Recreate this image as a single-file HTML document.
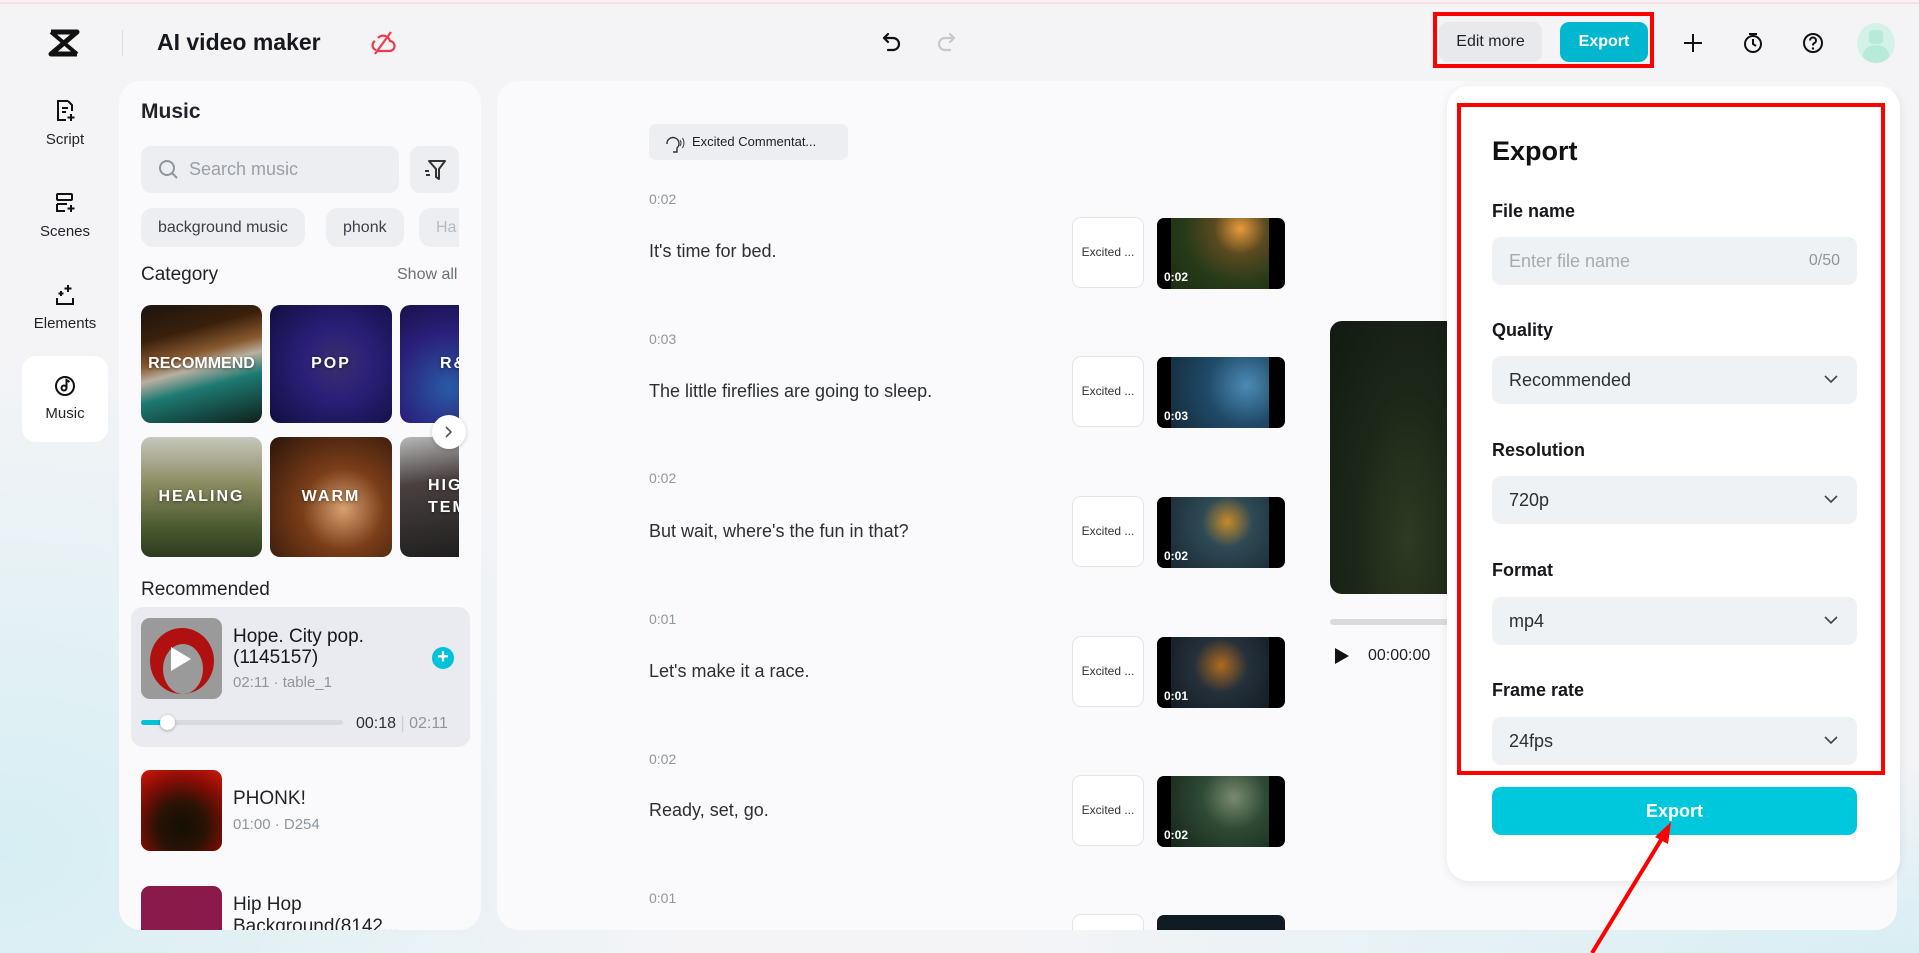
<!DOCTYPE html>
<html><head><meta charset="utf-8"><style>
*{box-sizing:border-box;margin:0;padding:0}
body{width:1919px;height:953px;overflow:hidden;font-family:"Liberation Sans",sans-serif;color:#1f2329;position:relative;
background:radial-gradient(ellipse 700px 500px at 0px 850px,#d6eef3 0%,rgba(214,238,243,0) 100%),radial-gradient(ellipse 900px 200px at 1900px 953px,#d8eef3 0%,rgba(216,238,243,0) 100%),#f4f4f7;}
.abs{position:absolute}
.topline{left:0;top:2px;width:1919px;height:2px;background:#f9dde3}
.nav{left:22px;width:86px;text-align:center;font-size:15px;color:#1f2329}
.nav svg{display:block;margin:0 auto 8px}
.panel{background:#fafafc;border-radius:22px}
.chip{background:#eceef2;border-radius:12px;height:39px;line-height:39px;font-size:16px;color:#3a3f47;padding:0 17px;position:absolute;top:207px}
.tile{position:absolute;border-radius:10px;overflow:hidden;color:#fff;font-weight:bold;font-size:16px;letter-spacing:2px;display:flex;align-items:center;justify-content:center;text-shadow:0 1px 3px rgba(0,0,0,.5)}
.tm{font-size:14px;color:#9096a0;position:absolute;left:649px}
.sent{font-size:18px;color:#2b2f36;position:absolute;left:649px}
.exc{position:absolute;left:1072px;width:72px;height:71px;border:1px solid #e3e5e8;border-radius:9px;background:#fff;font-size:12px;line-height:69px;text-align:center;color:#333}
.th{position:absolute;left:1157px;width:128px;height:71px;border-radius:7px;overflow:hidden;background:#000}
.th i{position:absolute;left:7px;bottom:5px;color:#fff;font-size:12px;font-style:normal;font-weight:bold}
.lbl{position:absolute;left:1492px;font-size:18px;font-weight:bold;color:#15181d}
.sel{position:absolute;left:1492px;width:365px;height:48px;background:#eff2f5;border-radius:9px;font-size:18px;line-height:48px;padding-left:17px;color:#2b2f36}
.sel svg{position:absolute;right:18px;top:17px}
</style></head><body>
<div class="abs topline"></div>

<svg class="abs" style="left:48px;top:29px" width="32" height="28" viewBox="0 0 32 28"><path d="M3 3h26L3 25h26" fill="none" stroke="#111" stroke-width="5" stroke-linejoin="round"/><path d="M3 3l26 22M29 3L3 25" stroke="#111" stroke-width="4"/></svg>
<div class="abs" style="left:122px;top:30px;width:1px;height:26px;background:#dcdde0"></div>
<div class="abs" style="left:157px;top:29px;font-size:23px;font-weight:bold;color:#15181d">AI video maker</div>
<svg class="abs" style="left:369px;top:29px" width="28" height="28" viewBox="0 0 28 28"><path d="M9 22h11a5 5 0 0 0 1-10 7 7 0 0 0-12-3M6 12a5 5 0 0 0 1 9" fill="none" stroke="#ee3b45" stroke-width="2.2"/><path d="M6 25L22 3" stroke="#ee3b45" stroke-width="2.2"/></svg>
<svg class="abs" style="left:880px;top:30px" width="24" height="24" viewBox="0 0 24 24"><path d="M8 4L4 8l4 4M4 8h9a6 6 0 0 1 0 12H8" fill="none" stroke="#111" stroke-width="2.2" stroke-linecap="round" stroke-linejoin="round"/></svg>
<svg class="abs" style="left:934px;top:30px" width="24" height="24" viewBox="0 0 24 24"><path d="M16 4l4 4-4 4M20 8h-9a6 6 0 0 0 0 12h5" fill="none" stroke="#c5c8cd" stroke-width="2.2" stroke-linecap="round" stroke-linejoin="round"/></svg>
<div class="abs" style="left:1433px;top:12px;width:221px;height:56px;border:4px solid #f00"></div>
<div class="abs" style="left:1439px;top:22px;width:103px;height:40px;background:#e8e9ec;border-radius:9px;font-size:16px;line-height:40px;text-align:center;color:#1f2329">Edit more</div>
<div class="abs" style="left:1560px;top:22px;width:88px;height:40px;background:#00b7cf;border-radius:9px;font-size:16px;font-weight:bold;line-height:40px;text-align:center;color:#fff">Export</div>
<svg class="abs" style="left:1682px;top:32px" width="22" height="22"><path d="M11 2v18M2 11h18" stroke="#111" stroke-width="2"/></svg>
<svg class="abs" style="left:1742px;top:31px" width="22" height="24" viewBox="0 0 22 24"><circle cx="11" cy="13" r="8" fill="none" stroke="#111" stroke-width="2"/><path d="M11 8v5l3 2M7 3h8" stroke="#111" stroke-width="2" fill="none"/></svg>
<svg class="abs" style="left:1802px;top:32px" width="22" height="22"><circle cx="11" cy="11" r="9" fill="none" stroke="#111" stroke-width="2"/><path d="M8 8.5a3 3 0 1 1 4 2.8c-1 .4-1 1-1 2.2" fill="none" stroke="#111" stroke-width="2"/><circle cx="11" cy="16.5" r="1.2" fill="#111"/></svg>
<div class="abs" style="left:1857px;top:23px;width:38px;height:40px;border-radius:50%;background:#d4f3e8;overflow:hidden"><div style="position:absolute;left:12px;top:7px;width:14px;height:14px;border-radius:4px;background:#b7ead8"></div><div style="position:absolute;left:6px;top:22px;width:26px;height:20px;border-radius:50%;background:#b7ead8"></div></div>

<div class="abs nav" style="top:99px"><svg width="22" height="24" viewBox="0 0 22 24"><path d="M14 2H4v19h8M14 2l4 4v6M8 9h6M8 13h4" fill="none" stroke="#111" stroke-width="2"/><path d="M17 15v7M13.5 18.5h7" stroke="#111" stroke-width="2"/></svg>Script</div>
<div class="abs nav" style="top:191px"><svg width="22" height="24" viewBox="0 0 22 24"><rect x="3" y="3" width="15" height="6" rx="1" fill="none" stroke="#111" stroke-width="2"/><path d="M3 13h10M3 13v7h8" fill="none" stroke="#111" stroke-width="2"/><path d="M17 14v7M13.5 17.5h7" stroke="#111" stroke-width="2"/></svg>Scenes</div>
<div class="abs nav" style="top:283px"><svg width="22" height="24" viewBox="0 0 22 24"><path d="M3 15v6h16v-6" fill="none" stroke="#111" stroke-width="2"/><path d="M14 2v7M10.5 5.5h7M7 8v5M4.5 10.5h5" stroke="#111" stroke-width="2"/></svg>Elements</div>
<div class="abs" style="left:22px;top:356px;width:86px;height:86px;background:#fff;border-radius:14px"></div>
<div class="abs nav" style="top:373px"><svg width="24" height="24" viewBox="0 0 24 24"><circle cx="12" cy="13" r="9" fill="none" stroke="#111" stroke-width="2"/><circle cx="11" cy="15" r="2.5" fill="none" stroke="#111" stroke-width="2"/><path d="M13.5 15V7l3 2" fill="none" stroke="#111" stroke-width="2"/></svg>Music</div>

<div class="abs panel" style="left:119px;top:81px;width:362px;height:849px"></div>
<div class="abs" style="left:141px;top:100px;font-size:21px;font-weight:600">Music</div>
<div class="abs" style="left:141px;top:146px;width:258px;height:47px;background:#eceef2;border-radius:10px;font-size:18px;color:#9aa0a8;line-height:47px;padding-left:48px">Search music</div>
<svg class="abs" style="left:157px;top:158px" width="22" height="24"><circle cx="10" cy="10" r="7" fill="none" stroke="#8f959e" stroke-width="2"/><path d="M15 15l5 5" stroke="#8f959e" stroke-width="2"/></svg>
<div class="abs" style="left:410px;top:146px;width:49px;height:47px;background:#eceef2;border-radius:10px"></div>
<svg class="abs" style="left:422px;top:157px" width="26" height="26" viewBox="0 0 26 26"><path d="M7 4h16l-6 8v10l-3-2v-8z" fill="none" stroke="#333" stroke-width="2" stroke-linejoin="round"/><path d="M3 14h4M4 18h4" stroke="#333" stroke-width="2"/></svg>
<div class="chip" style="left:141px;top:208px">background music</div>
<div class="chip" style="left:326px;top:208px">phonk</div>
<div class="abs" style="left:419px;top:208px;width:40px;height:39px;overflow:hidden"><div class="chip" style="left:0;top:0;color:#b8bcc2">Ha</div></div>
<div class="abs" style="left:141px;top:264px;font-size:19px">Category</div>
<div class="abs" style="left:397px;top:266px;font-size:16px;color:#6b7078">Show all</div>
<div class="tile" style="left:141px;top:305px;width:121px;height:118px;background:linear-gradient(165deg,#1a1410 0%,#3a200c 25%,#8a5a30 42%,#b8b0a0 52%,#1d7a72 66%,#0f201c 100%);letter-spacing:0">RECOMMEND</div>
<div class="tile" style="left:270px;top:305px;width:122px;height:118px;background:radial-gradient(circle at 55% 50%,#3a2f6e 0%,#2a1f78 40%,#120e40 100%)">POP</div>
<div class="abs" style="left:400px;top:305px;width:59px;height:118px;overflow:hidden;border-radius:10px 0 0 10px"><div class="tile" style="left:0;top:0;width:122px;height:118px;background:radial-gradient(circle at 40% 70%,#2a5aa5 0%,#2a1f7a 50%,#120c3a 100%);justify-content:flex-start;padding-left:40px">R&amp;B</div></div>
<div class="tile" style="left:141px;top:437px;width:121px;height:120px;background:linear-gradient(180deg,#c7c7bd 0%,#8a8a60 40%,#4b5a30 75%,#2e3a1e 100%)">HEALING</div>
<div class="tile" style="left:270px;top:437px;width:122px;height:120px;background:radial-gradient(circle at 60% 60%,#d8a070 0%,#7a3d18 40%,#2b140a 100%)">WARM</div>
<div class="abs" style="left:400px;top:437px;width:59px;height:120px;overflow:hidden;border-radius:10px 0 0 10px"><div class="tile" style="left:0;top:0;width:122px;height:120px;background:linear-gradient(170deg,#b9b9b9 0%,#4a4040 35%,#1a1a1a 100%);justify-content:flex-start;padding-left:28px;line-height:1.4">HIGH<br>TEMPO</div></div>
<div class="abs" style="left:432px;top:415px;width:34px;height:34px;border-radius:50%;background:#fff;box-shadow:0 1px 4px rgba(0,0,0,.2)"></div>
<svg class="abs" style="left:443px;top:425px" width="12" height="14"><path d="M3 2l5 5-5 5" fill="none" stroke="#555" stroke-width="1.6"/></svg>
<div class="abs" style="left:141px;top:579px;font-size:19px">Recommended</div>
<div class="abs" style="left:131px;top:607px;width:339px;height:140px;background:#e9ebf0;border-radius:12px"></div>
<div class="abs" style="left:141px;top:618px;width:81px;height:81px;border-radius:9px;background:#9a9a9a;overflow:hidden"><div style="position:absolute;left:9px;top:10px;width:64px;height:66px;border-radius:50%;background:#b01010"></div><div style="position:absolute;left:22px;top:26px;width:40px;height:50px;border-radius:50%;background:#9a9a9a"></div><svg style="position:absolute;left:28px;top:27px" width="24" height="28"><path d="M2 2l20 12L2 26z" fill="#fff"/></svg></div>
<div class="abs" style="left:233px;top:626px;font-size:19px;line-height:21px;color:#15181d">Hope. City pop.<br>(1145157)</div>
<div class="abs" style="left:233px;top:674px;font-size:15px;color:#8f959e">02:11 · table_1</div>
<div class="abs" style="left:432px;top:647px;width:22px;height:22px;border-radius:50%;background:#00c2da;color:#fff;font-size:20px;line-height:21px;text-align:center;font-weight:bold">+</div>
<div class="abs" style="left:141px;top:720px;width:202px;height:5px;border-radius:3px;background:#d7dbe0"></div>
<div class="abs" style="left:141px;top:720px;width:26px;height:5px;border-radius:3px;background:#00c2da"></div>
<div class="abs" style="left:160px;top:715px;width:15px;height:15px;border-radius:50%;background:#fff;box-shadow:0 1px 3px rgba(0,0,0,.3)"></div>
<div class="abs" style="left:356px;top:715px;font-size:16px;color:#2b2f36">00:18 <span style="color:#c8ccd1">|</span> <span style="color:#8f959e">02:11</span></div>
<div class="abs" style="left:141px;top:770px;width:81px;height:81px;border-radius:9px;background:radial-gradient(circle at 50% 70%,#140f05 0%,#2a1205 35%,#8a0d05 70%,#d01a0a 100%)"></div>
<div class="abs" style="left:233px;top:788px;font-size:19px">PHONK!</div>
<div class="abs" style="left:233px;top:816px;font-size:15px;color:#8f959e">01:00 · D254</div>
<div class="abs" style="left:141px;top:886px;width:81px;height:44px;border-radius:9px 9px 0 0;background:#8a1a4a"></div>
<div class="abs" style="left:233px;top:894px;font-size:19px;line-height:22px;height:36px;overflow:hidden">Hip Hop<br>Background(8142...</div>

<div class="abs panel" style="left:497px;top:81px;width:1400px;height:849px"></div>
<div class="abs" style="left:649px;top:124px;width:199px;height:36px;background:#eceef2;border-radius:7px;font-size:13px;line-height:36px;padding-left:43px;color:#222">Excited Commentat...</div>
<svg class="abs" style="left:663px;top:132px" width="24" height="22"><path d="M4 12a6 6 0 1 1 10 4v4h-4" fill="none" stroke="#333" stroke-width="1.4"/><path d="M17 8q2 3 0 6M19.5 6q3 5 0 10" fill="none" stroke="#333" stroke-width="1"/></svg>
<div class="tm" style="top:191px">0:02</div><div class="sent" style="top:241px">It's time for bed.</div>
<div class="tm" style="top:331px">0:03</div><div class="sent" style="top:381px">The little fireflies are going to sleep.</div>
<div class="tm" style="top:470px">0:02</div><div class="sent" style="top:521px">But wait, where's the fun in that?</div>
<div class="tm" style="top:611px">0:01</div><div class="sent" style="top:661px">Let's make it a race.</div>
<div class="tm" style="top:751px">0:02</div><div class="sent" style="top:800px">Ready, set, go.</div>
<div class="tm" style="top:890px">0:01</div>
<div class="exc" style="top:217px">Excited ...</div>
<div class="th" style="top:218px;background:linear-gradient(90deg,#000 0 14px,transparent 14px calc(100% - 16px),#000 0),radial-gradient(circle at 65% 15%,#e89a3a 0%,#5a4a20 25%,#263a18 55%,#1b2a12 100%)"><i>0:02</i></div>
<div class="exc" style="top:356px">Excited ...</div>
<div class="th" style="top:357px;background:linear-gradient(90deg,#000 0 14px,transparent 14px calc(100% - 16px),#000 0),radial-gradient(circle at 70% 40%,#4d8ab5 0%,#1f4a68 40%,#13222e 100%)"><i>0:03</i></div>
<div class="exc" style="top:496px">Excited ...</div>
<div class="th" style="top:497px;background:linear-gradient(90deg,#000 0 14px,transparent 14px calc(100% - 16px),#000 0),radial-gradient(circle at 55% 35%,#c88a2a 0%,#2e4a55 30%,#12202a 100%)"><i>0:02</i></div>
<div class="exc" style="top:636px">Excited ...</div>
<div class="th" style="top:637px;background:linear-gradient(90deg,#000 0 14px,transparent 14px calc(100% - 16px),#000 0),radial-gradient(circle at 50% 40%,#b06a20 0%,#24303a 35%,#0e161e 100%)"><i>0:01</i></div>
<div class="exc" style="top:775px">Excited ...</div>
<div class="th" style="top:776px;background:linear-gradient(90deg,#000 0 14px,transparent 14px calc(100% - 16px),#000 0),radial-gradient(circle at 60% 30%,#7a8a70 0%,#2e4a35 35%,#101a14 100%)"><i>0:02</i></div>
<div class="exc" style="top:914px;height:16px;border-bottom:none;border-radius:9px 9px 0 0"></div>
<div class="th" style="top:915px;height:15px;border-radius:7px 7px 0 0;background:#101a22"></div>
<div class="abs" style="left:1330px;top:321px;width:130px;height:273px;border-radius:12px;background:radial-gradient(ellipse at 60% 80%,#2e3a22 0%,#1c2618 50%,#121a12 100%)"></div>
<div class="abs" style="left:1330px;top:619px;width:130px;height:6px;border-radius:3px;background:#d9dadc"></div>
<svg class="abs" style="left:1334px;top:647px" width="16" height="18"><path d="M1 1l14 8-14 8z" fill="#111"/></svg>
<div class="abs" style="left:1368px;top:647px;font-size:16px;color:#222">00:00:00</div>

<div class="abs" style="left:1447px;top:86px;width:453px;height:795px;background:#fff;border-radius:22px;box-shadow:0 2px 10px rgba(0,0,0,.08)"></div>
<div class="abs" style="left:1457px;top:103px;width:428px;height:672px;border:4px solid #f00"></div>
<div class="abs" style="left:1492px;top:136px;font-size:27px;font-weight:bold;color:#111">Export</div>
<div class="lbl" style="top:201px">File name</div>
<div class="sel" style="top:237px;color:#a5abb3">Enter file name<span style="position:absolute;right:17px;font-size:16px;color:#8f959e">0/50</span></div>
<div class="lbl" style="top:320px">Quality</div>
<div class="sel" style="top:356px">Recommended<svg width="16" height="12"><path d="M2 3l6 6 6-6" fill="none" stroke="#444" stroke-width="1.6"/></svg></div>
<div class="lbl" style="top:440px">Resolution</div>
<div class="sel" style="top:476px">720p<svg width="16" height="12"><path d="M2 3l6 6 6-6" fill="none" stroke="#444" stroke-width="1.6"/></svg></div>
<div class="lbl" style="top:560px">Format</div>
<div class="sel" style="top:597px">mp4<svg width="16" height="12"><path d="M2 3l6 6 6-6" fill="none" stroke="#444" stroke-width="1.6"/></svg></div>
<div class="lbl" style="top:680px">Frame rate</div>
<div class="sel" style="top:717px">24fps<svg width="16" height="12"><path d="M2 3l6 6 6-6" fill="none" stroke="#444" stroke-width="1.6"/></svg></div>
<div class="abs" style="left:1492px;top:787px;width:365px;height:48px;background:#00c8dc;border-radius:9px;color:#fff;font-size:18px;font-weight:bold;line-height:48px;text-align:center">Export</div>

<svg class="abs" style="left:0;top:0" width="1919" height="953"><path d="M1592 953L1664 835" stroke="#f00" stroke-width="4"/><path d="M1671 822l-16 15 13 7z" fill="#f00"/></svg>
</body></html>
